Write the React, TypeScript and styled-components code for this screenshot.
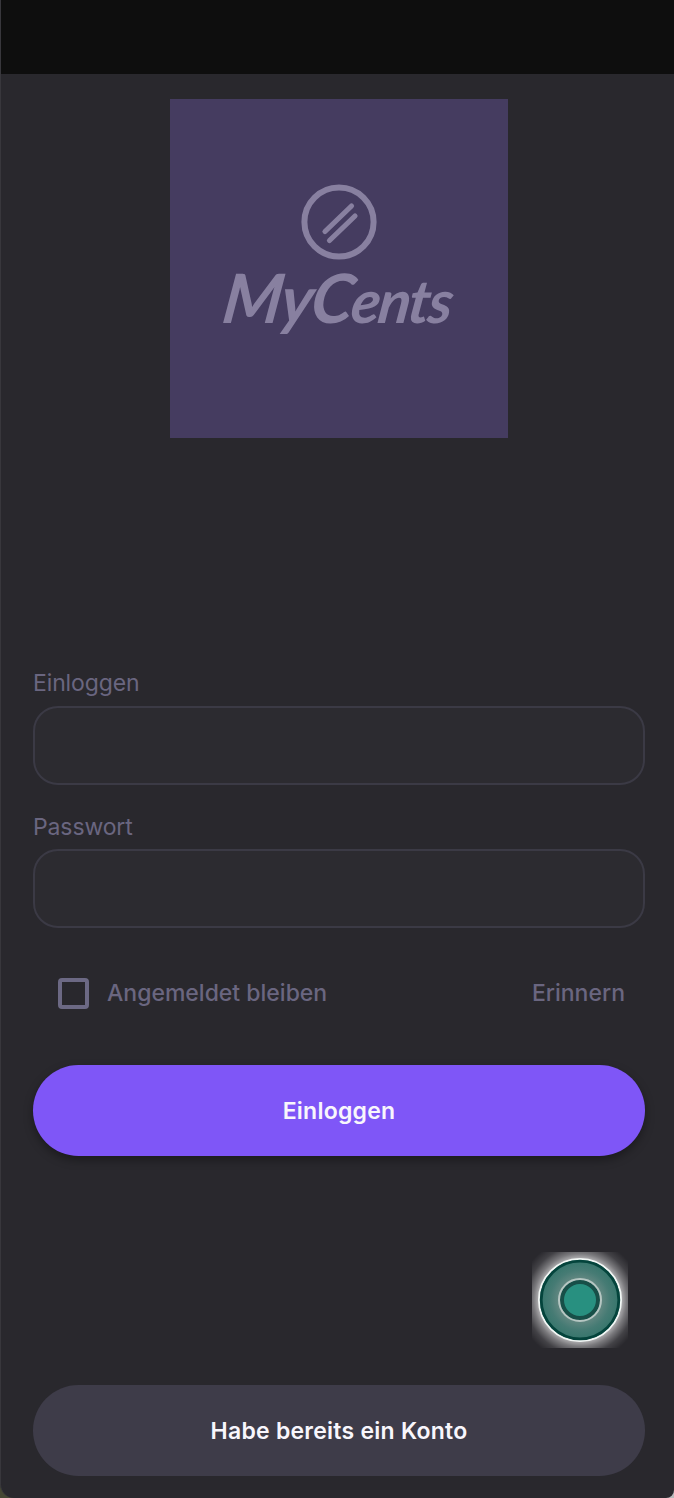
import React from "react";
import styled, { createGlobalStyle } from "styled-components";

const GlobalStyle = createGlobalStyle`
  *, *::before, *::after { box-sizing: border-box; }
  body {
    margin: 0;
    background: linear-gradient(90deg, #454733 0 50%, #b9b9bb 50% 100%);
    font-family: Inter, "Liberation Sans", sans-serif;
  }
`;

const Screen = styled.main`
  position: relative;
  display: flex;
  flex-direction: column;
  width: 674px;
  height: 1498px;
  overflow: hidden;
  background: #29282d;
  border-left: 1px solid #38373c;
  border-radius: 0 0 8px 14px;
`;

const StatusBar = styled.header`
  flex: none;
  height: 74px;
  background: #0e0e0e;
`;

const Content = styled.div`
  display: flex;
  flex: 1;
  flex-direction: column;
  padding: 25px 29px 22.5px 32px;
`;

const Brand = styled.div`
  display: flex;
  flex: none;
  flex-direction: column;
  align-items: center;
  align-self: center;
  width: 338.4px;
  height: 338.6px;
  padding-top: 85px;
  background: #453c60;
  color: #8880a0;
`;

const Coin = styled.svg`
  display: block;
  width: 76px;
  height: 76px;
`;

const Wordmark = styled.span`
  margin-top: -3px;
  font-family: Lato, "Liberation Sans", sans-serif;
  font-size: 60px;
  font-style: italic;
  font-weight: 700;
  line-height: 80px;
  letter-spacing: -2px;
  white-space: nowrap;
  transform: translateX(-1px) skewX(-8deg);
`;

const Initial = styled.span`
  font-size: 68px;
`;

const Tail = styled.span`
  font-size: 66px;
`;

const Form = styled.form`
  display: flex;
  flex-direction: column;
  margin-top: 231.4px;
`;

const Field = styled.label`
  display: flex;
  flex-direction: column;
  height: 143.6px;
  color: #6a6680;
  font-size: 23px;
  line-height: 28px;
  letter-spacing: -0.12px;
`;

const Input = styled.input`
  width: 100%;
  height: 79px;
  margin: 8.8px 0 0;
  padding: 0 24px;
  border: 2px solid #3b3a45;
  border-radius: 25px;
  outline: none;
  background: #2c2b30;
  color: #fff;
  font: inherit;
`;

const Options = styled.div`
  display: flex;
  align-items: center;
  height: 32px;
  margin-top: 21.2px;
  padding: 0 20px 0 25px;
  color: #6a6680;
  font-size: 23px;
  font-weight: 500;
`;

const Checkbox = styled.input`
  appearance: none;
  width: 31px;
  height: 31px;
  margin: 0 18px 0 0;
  border: 4px solid #6c6984;
  border-radius: 4px;
`;

const Reminder = styled.a`
  margin-left: auto;
`;

const Button = styled.button<{ $primary?: boolean }>`
  flex: none;
  width: 100%;
  height: 91px;
  padding: 1.4px 0 0;
  border: 0;
  border-radius: 46px;
  background: ${({ $primary }) => ($primary ? "#7f56f7" : "#3e3c49")};
  box-shadow: ${({ $primary }) => ($primary ? "0 4px 10px rgba(0, 0, 0, 0.35)" : "none")};
  color: #f8f6fc;
  font: 600 23px/28px Inter, "Liberation Sans", sans-serif;
  letter-spacing: 0.25px;
`;

const Submit = styled(Button)`
  margin-top: 55.6px;
`;

const Existing = styled(Button)`
  margin-top: auto;
`;

const TouchMarker = styled.div`
  position: absolute;
  left: 531px;
  top: 1252px;
  width: 96px;
  height: 96px;
`;

export default function App() {
  return (
    <>
      <GlobalStyle />
      <Screen>
        <StatusBar />
        <Content>
          <Brand>
            <Coin viewBox="0 0 76 76" fill="none" stroke="currentColor" strokeLinecap="round">
              <circle cx="38" cy="38" r="34.6" strokeWidth="6" />
              <path d="M24 47.5 50.5 22M28.5 56.5 54 32" strokeWidth="5.2" />
            </Coin>
            <Wordmark>
              <Initial>M</Initial>
              <Tail>y</Tail>
              <Initial>C</Initial>ents
            </Wordmark>
          </Brand>
          <Form onSubmit={(e) => e.preventDefault()}>
            <Field>
              Einloggen
              <Input type="text" />
            </Field>
            <Field>
              Passwort
              <Input type="password" />
            </Field>
            <Options>
              <Checkbox type="checkbox" id="stay" />
              <label htmlFor="stay">Angemeldet bleiben</label>
              <Reminder>Erinnern</Reminder>
            </Options>
            <Submit $primary type="submit">Einloggen</Submit>
          </Form>
          <Existing type="button">Habe bereits ein Konto</Existing>
        </Content>
        <TouchMarker>
          <svg width="96" height="96" viewBox="0 0 96 96">
            <defs>
              <radialGradient id="halo" gradientUnits="userSpaceOnUse" cx="48" cy="48" r="62">
                <stop offset="0.65" stopColor="#fff" stopOpacity="0.68" />
                <stop offset="0.75" stopColor="#fff" stopOpacity="0.38" />
                <stop offset="0.87" stopColor="#fff" stopOpacity="0.12" />
                <stop offset="1" stopColor="#fff" stopOpacity="0" />
              </radialGradient>
              <radialGradient id="disc" gradientUnits="userSpaceOnUse" cx="48" cy="48" r="40">
                <stop offset="0.5" stopColor="#668983" />
                <stop offset="0.75" stopColor="#467b74" />
                <stop offset="1" stopColor="#35756b" />
              </radialGradient>
            </defs>
            <rect width="96" height="96" fill="url(#halo)" />
            <circle cx="48" cy="48" r="41" fill="url(#disc)" stroke="#f2f7f5" strokeWidth="2" />
            <circle cx="48" cy="48" r="38.8" fill="none" stroke="#04443c" strokeWidth="2.8" />
            <circle cx="48" cy="48" r="18" fill="#289080" stroke="#174f48" strokeWidth="4" />
            <circle cx="48" cy="48" r="21" fill="none" stroke="#b5c6c2" strokeWidth="2" />
          </svg>
        </TouchMarker>
      </Screen>
    </>
  );
}
